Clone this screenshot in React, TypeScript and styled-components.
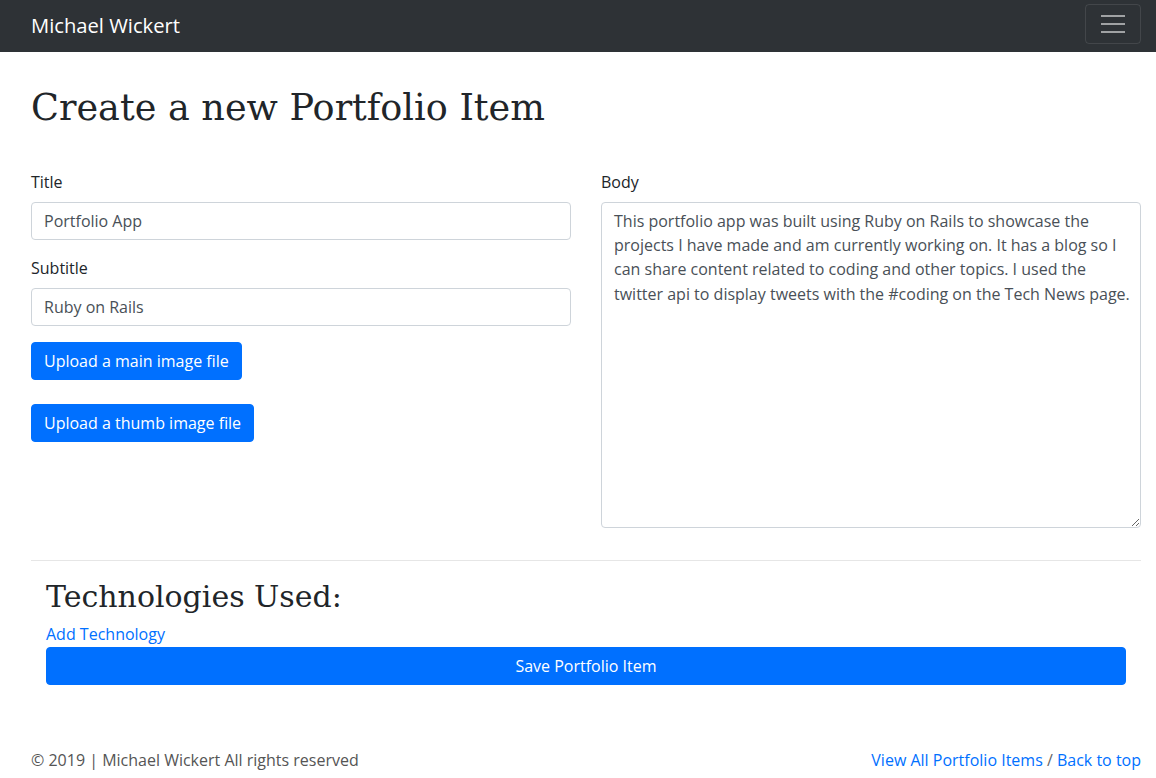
import React from "react";
import styled, { createGlobalStyle } from "styled-components";

const GlobalStyle = createGlobalStyle`
  html, body { margin: 0; padding: 0; background: #fff; }
  body {
    font-family: "Open Sans", "Noto Sans", sans-serif;
    font-size: 16px;
    line-height: 1.5;
    color: #212529;
  }
  * { box-sizing: border-box; }
`;

const Navbar = styled.nav`
  height: 52px;
  background: #2e3236;
  display: flex;
  align-items: center;
  justify-content: space-between;
  padding: 0 15px 4px 31px;
`;

const Brand = styled.a`
  color: #fff;
  font-size: 20.2px;
  line-height: 30px;
  text-decoration: none;
  margin-top: 1px;
`;

const Toggler = styled.button`
  width: 56px;
  height: 40px;
  background: transparent;
  border: 1px solid rgba(255, 255, 255, 0.1);
  border-radius: 4px;
  display: flex;
  align-items: center;
  justify-content: center;
  padding: 0;
`;

const Main = styled.main`
  padding: 0 15px 0 31px;
`;

const Heading = styled.h1`
  font-family: "DejaVu Serif", serif;
  font-weight: 400;
  font-size: 36.6px;
  line-height: 48px;
  margin: 32px 0 38px;
`;

const FormRow = styled.div`
  display: grid;
  grid-template-columns: 1fr 1fr;
  column-gap: 30px;
`;

const Column = styled.div`
  display: flex;
  flex-direction: column;
`;

const Group = styled.div`
  display: flex;
  flex-direction: column;
  margin-bottom: 16px;
`;

const Label = styled.label`
  display: block;
  line-height: 24px;
  margin-bottom: 8px;
`;

const Input = styled.input`
  height: 38px;
  padding: 6px 12px;
  font: inherit;
  color: #495057;
  border: 1px solid #ced4da;
  border-radius: 4px;
  outline: none;
`;

const TextArea = styled.textarea`
  height: 326px;
  padding: 6px 12px;
  font: inherit;
  line-height: 24.2px;
  color: #495057;
  border: 1px solid #ced4da;
  border-radius: 4px;
  resize: vertical;
  outline: none;
  white-space: pre;
  overflow: hidden;
`;

const PrimaryButton = styled.button<{ $block?: boolean; $gap?: number }>`
  display: ${(p) => (p.$block ? "block" : "inline-block")};
  width: ${(p) => (p.$block ? "100%" : "auto")};
  align-self: flex-start;
  height: 38px;
  padding: 0 12px;
  font: inherit;
  color: #fff;
  background: #0070ff;
  border: 1px solid #0070ff;
  border-radius: 4px;
  margin-bottom: ${(p) => p.$gap ?? 0}px;
  cursor: pointer;
`;

const Divider = styled.hr`
  border: 0;
  border-top: 1px solid #e6e6e6;
  margin: 16px 0 0;
`;

const TechSection = styled.section`
  padding: 17px 15px 0;
`;

const SubHeading = styled.h2`
  font-family: "DejaVu Serif", serif;
  font-weight: 400;
  font-size: 30px;
  line-height: 38px;
  margin: 0 0 6px;
`;

const Link = styled.a`
  color: #0070ff;
  text-decoration: none;
  line-height: 24px;
  display: inline-block;
`;

const TechLink = styled(Link)`
  margin-bottom: 1px;
`;

const Footer = styled.footer`
  display: flex;
  justify-content: space-between;
  padding: 63px 15px 0 31px;
  color: #555;
  line-height: 24px;
`;

const Sep = styled.span`
  color: #666;
`;

const body =
  "This portfolio app was built using Ruby on Rails to showcase the\nprojects I have made and am currently working on. It has a blog so I\ncan share content related to coding and other topics. I used the\ntwitter api to display tweets with the #coding on the Tech News page.";

export default function App() {
  return (
    <>
      <GlobalStyle />
      <Navbar>
        <Brand href="#">Michael Wickert</Brand>
        <Toggler aria-label="menu">
          <svg width="30" height="30" viewBox="0 0 30 30">
            <path
              d="M3 7h24M3 15h24M3 23h24"
              stroke="rgba(255,255,255,0.55)"
              strokeWidth="2"
            />
          </svg>
        </Toggler>
      </Navbar>
      <Main>
        <Heading>Create a new Portfolio Item</Heading>
        <FormRow>
          <Column>
            <Group>
              <Label>Title</Label>
              <Input defaultValue="Portfolio App" />
            </Group>
            <Group>
              <Label>Subtitle</Label>
              <Input defaultValue="Ruby on Rails" />
            </Group>
            <PrimaryButton $gap={24}>Upload a main image file</PrimaryButton>
            <PrimaryButton>Upload a thumb image file</PrimaryButton>
          </Column>
          <Column>
            <Group>
              <Label>Body</Label>
              <TextArea defaultValue={body} wrap="off" />
            </Group>
          </Column>
        </FormRow>
        <Divider />
        <TechSection>
          <SubHeading>Technologies Used:</SubHeading>
          <TechLink href="#">Add Technology</TechLink>
          <PrimaryButton $block>Save Portfolio Item</PrimaryButton>
        </TechSection>
      </Main>
      <Footer>
        <span>© 2019 | Michael Wickert All rights reserved</span>
        <span>
          <Link href="#">View All Portfolio Items</Link> <Sep>/</Sep>{" "}
          <Link href="#">Back to top</Link>
        </span>
      </Footer>
    </>
  );
}
